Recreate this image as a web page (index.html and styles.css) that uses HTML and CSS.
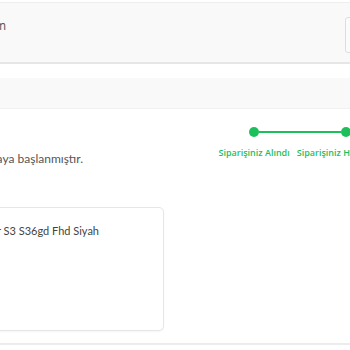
FILE: index.html
```html
<!DOCTYPE html>
<html lang="tr">
<head>
<meta charset="utf-8">
<title>Sipariş Detayı</title>
<link rel="stylesheet" href="styles.css">
</head>
<body>
<div class="page">
  <header class="topbar">
    <div class="clip clip-top"><span class="top-text">Hesabım</span></div>
    <div class="top-box"></div>
  </header>
  <div class="band"></div>
  <section class="status-row">
    <div class="clip clip-status"><span class="status-text">Siparişiniz hazırlanmaya başlanmıştır.</span></div>
    <ol class="stepper">
      <li class="step step-first">
        <div class="track"><span class="seg"></span><span class="dot"></span><span class="seg on"></span></div>
        <span class="label">Siparişiniz Alındı</span>
      </li>
      <li class="step step-last">
        <div class="track"><span class="seg on"></span><span class="dot"></span><span class="seg"></span></div>
        <span class="label">Siparişiniz Hazırlanıyor</span>
      </li>
    </ol>
  </section>
  <article class="card">
    <div class="clip clip-card"><span class="product">Samsung Monitor S3 S36gd Fhd Siyah</span></div>
  </article>
  <div class="bottom-rule"></div>
</div>
</body>
</html>
```
FILE: styles.css
```css
html, body {
  margin: 0;
  padding: 0;
  background: #ffffff;
  overflow: hidden;
}
body {
  font-family: "Open Sans", "Noto Sans", sans-serif;
  color: #555555;
}
.page {
  width: 350px;
  overflow: hidden;
}
.clip {
  display: flex;
  justify-content: flex-end;
  white-space: nowrap;
  flex-shrink: 0;
}
.topbar {
  margin-top: 2px;
  height: 59px;
  border-top: 1px solid #eeeeee;
  border-bottom: 2px solid #e6e6e6;
  background: #f9f9f9;
  display: flex;
  align-items: flex-start;
  justify-content: space-between;
  overflow: hidden;
}
.clip-top {
  width: 6px;
  margin-top: 15px;
}
.top-text {
  font-size: 12px;
  line-height: 16px;
  color: #555555;
}
.top-box {
  width: 40px;
  height: 34px;
  margin-top: 14px;
  margin-right: -37px;
  border: 1px solid #dddddd;
  border-radius: 3px;
  background: #fbfbfb;
  flex-shrink: 0;
}
.band {
  margin-top: 14px;
  height: 30px;
  background: #f9f9f9;
  border-bottom: 1px solid #f1f1f1;
}
.status-row {
  display: flex;
  align-items: flex-start;
  margin-top: 18px;
  overflow: hidden;
}
.clip-status {
  width: 83px;
  margin-top: 24px;
}
.status-text {
  font-family: Lato, "Open Sans", sans-serif;
  font-size: 12px;
  line-height: 15px;
  color: #555555;
}
.stepper {
  list-style: none;
  margin: 0 0 0 132px;
  padding: 0;
  display: flex;
  flex-shrink: 0;
}
.step {
  display: flex;
  flex-direction: column;
  align-items: stretch;
}
.track {
  display: flex;
  align-items: center;
  height: 10px;
}
.seg {
  flex: 1;
  height: 2px;
}
.seg.on {
  background: #1dbf5b;
}
.dot {
  width: 10px;
  height: 10px;
  border-radius: 50%;
  background: #1dbf5b;
  flex-shrink: 0;
}
.label {
  margin-top: 10px;
  padding: 0 3.5px;
  font-size: 9px;
  line-height: 12px;
  font-weight: 600;
  color: #1dbf5b;
  white-space: nowrap;
}
.card {
  margin-top: 41px;
  margin-left: -36px;
  width: 200px;
  height: 124px;
  box-sizing: border-box;
  border: 1px solid #e6e6e6;
  border-radius: 5px;
  box-shadow: 0 1px 2px rgba(0, 0, 0, 0.04);
  background: #ffffff;
}
.clip-card {
  width: 134px;
  margin-top: 15px;
}
.product {
  font-family: Lato, "Open Sans", sans-serif;
  font-size: 11px;
  line-height: 16px;
  color: #444444;
}
.bottom-rule {
  margin-top: 12px;
  height: 2px;
  background: #ececec;
}
```
